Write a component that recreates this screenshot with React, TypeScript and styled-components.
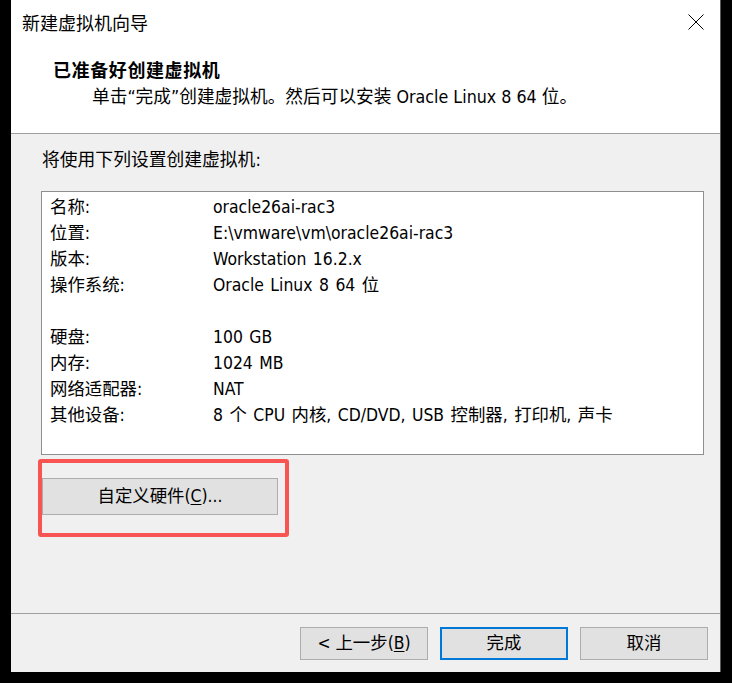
import React from "react";
import styled, { createGlobalStyle } from "styled-components";

const FONT = `"DejaVu Sans Condensed", "DejaVu Sans", "Noto Sans CJK SC", sans-serif`;

const Global = createGlobalStyle`
  html, body { margin: 0; padding: 0; background: #000; }
  body { font-family: ${FONT}; color: #000; }
  * { box-sizing: border-box; }
`;

const Dialog = styled.div`
  margin-left: 11px;
  width: 710px;
  height: 672px;
  background: #f0f0f0;
  border-right: 1px solid #5a5a5a;
  display: flex;
  flex-direction: column;
  font-stretch: condensed;
`;

const TitleBar = styled.div`
  height: 44px;
  background: #fff;
  display: flex;
  align-items: center;
  justify-content: space-between;
  padding: 0 16px 0 11px;
`;

const Title = styled.div`
  font-family: "Noto Sans CJK SC", sans-serif;
  font-size: 18px;
  line-height: 24px;
`;

const CloseIcon = styled.svg`
  width: 16px;
  height: 16px;
  display: block;
`;

const Header = styled.div`
  background: #fff;
  height: 90px;
  border-bottom: 1px solid #a0a0a0;
  padding: 12px 0 0 42px;
`;

const HeaderTitle = styled.div`
  font-family: "Noto Sans CJK SC", sans-serif;
  font-weight: 700;
  font-size: 18px;
  letter-spacing: 0.6px;
  line-height: 26px;
`;

const HeaderSub = styled.div`
  margin-top: 2px;
  padding-left: 39px;
  font-size: 17.7px;
  line-height: 26px;
`;

const Body = styled.div`
  flex: 1;
  padding: 13px 0 0 30px;
  border-bottom: 1px solid #a0a0a0;
`;

const Intro = styled.div`
  padding-left: 1px;
  font-size: 17.8px;
  line-height: 26px;
  margin-bottom: 18px;
`;

const SummaryBox = styled.div`
  width: 663px;
  height: 264px;
  background: #fff;
  border: 1px solid #8e8f8f;
  padding: 2px 0 0 8px;
`;

const Row = styled.div`
  display: grid;
  grid-template-columns: 163px 1fr;
  height: 26px;
  line-height: 26px;
  font-size: 17.4px;
  word-spacing: 1.5px;
  white-space: nowrap;
`;

const Highlight = styled.div`
  margin: 4px 0 0 -3px;
  width: 251px;
  border: 4px solid #f75452;
  border-radius: 3px;
  padding: 15px 7px 18px 0;
`;

const Button = styled.button<{ $primary?: boolean; $wide?: boolean }>`
  font-family: ${FONT};
  font-stretch: condensed;
  font-size: 17.4px;
  color: #000;
  width: ${(p) => (p.$wide ? "236px" : "128px")};
  height: ${(p) => (p.$wide ? "37px" : "33px")};
  background: #e1e1e1;
  border: ${(p) => (p.$primary ? "2px solid #0078d7" : "1px solid #adadad")};
  padding: 0;
  margin: 0;
  display: flex;
  align-items: center;
  justify-content: center;
  line-height: 1;
`;

const Footer = styled.div`
  display: flex;
  justify-content: flex-end;
  gap: 12px;
  padding: 13px 12px 0 0;
  height: 58px;
`;

const U = styled.span`
  text-decoration: underline;
  text-underline-offset: 2px;
`;

const rows: [string, string][] = [
  ["名称:", "oracle26ai-rac3"],
  ["位置:", "E:\\vmware\\vm\\oracle26ai-rac3"],
  ["版本:", "Workstation 16.2.x"],
  ["操作系统:", "Oracle Linux 8 64 位"],
  ["", ""],
  ["硬盘:", "100 GB"],
  ["内存:", "1024 MB"],
  ["网络适配器:", "NAT"],
  ["其他设备:", "8 个 CPU 内核, CD/DVD, USB 控制器, 打印机, 声卡"],
];

export default function App() {
  return (
    <>
      <Global />
      <Dialog>
        <TitleBar>
          <Title>新建虚拟机向导</Title>
          <CloseIcon viewBox="0 0 16 16">
            <path d="M0.5 0.5 L15.5 15.5 M15.5 0.5 L0.5 15.5" stroke="#000" strokeWidth="1" fill="none" />
          </CloseIcon>
        </TitleBar>
        <Header>
          <HeaderTitle>已准备好创建虚拟机</HeaderTitle>
          <HeaderSub>单击“完成”创建虚拟机。然后可以安装 Oracle Linux 8 64 位。</HeaderSub>
        </Header>
        <Body>
          <Intro>将使用下列设置创建虚拟机:</Intro>
          <SummaryBox>
            {rows.map(([k, v], i) => (
              <Row key={i}>
                <span>{k}</span>
                <span>{v}</span>
              </Row>
            ))}
          </SummaryBox>
          <Highlight>
            <Button $wide>
              自定义硬件(<U>C</U>)...
            </Button>
          </Highlight>
        </Body>
        <Footer>
          <Button>
            &lt; 上一步(<U>B</U>)
          </Button>
          <Button $primary>完成</Button>
          <Button>取消</Button>
        </Footer>
      </Dialog>
    </>
  );
}
